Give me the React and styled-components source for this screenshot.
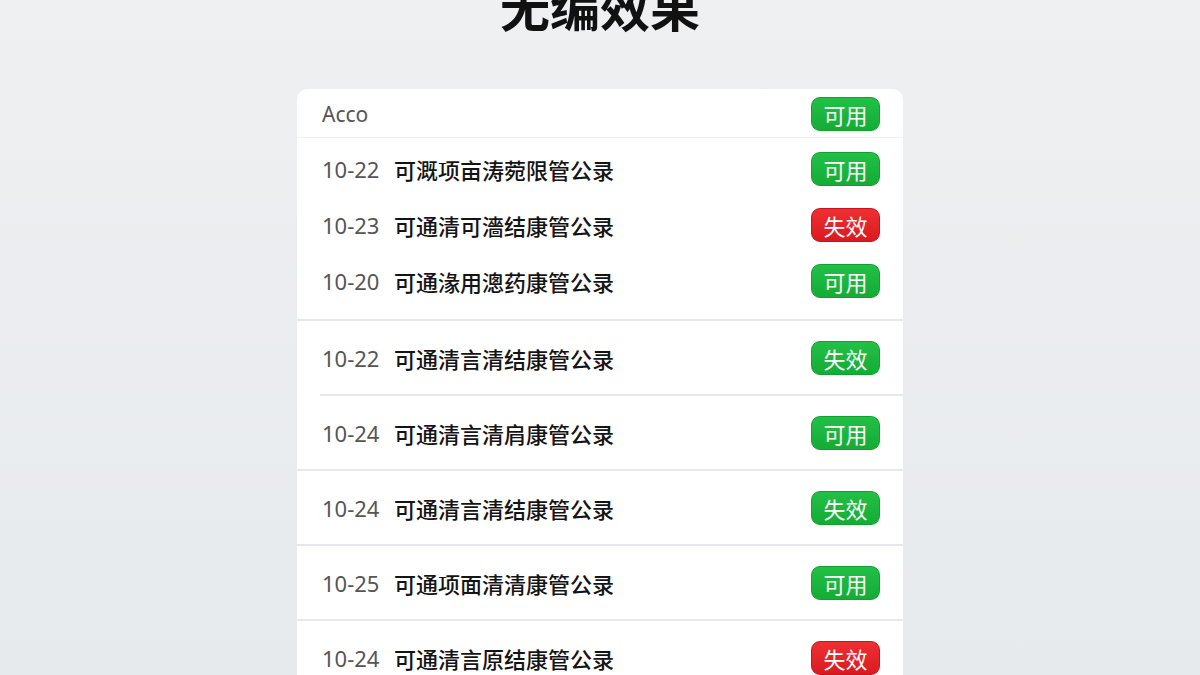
import React from "react";
import styled, { createGlobalStyle } from "styled-components";

const GlobalStyle = createGlobalStyle`
  html, body {
    margin: 0;
    padding: 0;
    height: 100%;
    overflow: hidden;
  }
  body {
    background: linear-gradient(180deg, #eef0f2 0%, #e7eaed 100%);
    font-family: "Noto Sans", "Noto Sans CJK SC", sans-serif;
  }
`;

const Page = styled.main`
  display: flex;
  flex-direction: column;
  align-items: center;
  width: 1200px;
  height: 675px;
`;

const Title = styled.h1`
  flex-shrink: 0;
  margin: -20px 0 0;
  height: 109px;
  font-family: "Noto Sans CJK SC", sans-serif;
  font-size: 50px;
  font-weight: 700;
  line-height: 50px;
  color: #111;
`;

const Card = styled.section`
  flex-shrink: 0;
  width: 606px;
  background: #fff;
  border-radius: 10px 10px 0 0;
  display: flex;
  flex-direction: column;
`;

const Header = styled.div`
  display: flex;
  align-items: center;
  justify-content: space-between;
  height: 49px;
  padding: 2px 23px 0 25px;
  box-sizing: border-box;
  border-bottom: 1px solid #f0f1f3;
`;

const HeaderLabel = styled.span`
  font-size: 21px;
  color: #555;
`;

const Group = styled.div`
  display: flex;
  flex-direction: column;
  padding: ${(p) => (p.$compact ? "3px 0 10px" : "0")};
  border-bottom: 2px solid #e6e8eb;
  margin-left: ${(p) => (p.$inset ? "23px" : "0")};
`;

const Row = styled.div`
  display: flex;
  align-items: center;
  height: ${(p) => (p.$compact ? "56px" : "73px")};
  padding: 0 23px 0 ${(p) => (p.$inset ? "2px" : "25px")};
`;

const Date = styled.span`
  font-size: 22px;
  color: #555;
  width: 72px;
  flex-shrink: 0;
`;

const Name = styled.span`
  flex: 1;
  font-family: "Noto Sans CJK SC", sans-serif;
  font-size: 22px;
  font-weight: 500;
  color: #141414;
`;

const Badge = styled.span`
  display: inline-flex;
  align-items: center;
  justify-content: center;
  width: 69px;
  height: 34px;
  box-sizing: border-box;
  border-radius: 9px;
  font-family: "Noto Sans CJK SC", sans-serif;
  font-size: 22px;
  color: #fff;
  background: ${(p) =>
    p.$ok
      ? "linear-gradient(180deg, #22c046 0%, #14ac35 100%)"
      : "linear-gradient(180deg, #ee2f33 0%, #d91a20 100%)"};
  border: 1px solid ${(p) => (p.$ok ? "#12a02f" : "#c8141a")};
`;

const firstGroup = [
  { date: "10-22", name: "可溉项亩涛菀限管公录", ok: true },
  { date: "10-23", name: "可通清可濇结康管公录", ok: false },
  { date: "10-20", name: "可通湪用漗药康管公录", ok: true },
];

const rows = [
  { date: "10-22", name: "可通清言清结康管公录", label: "失效", ok: true, inset: true },
  { date: "10-24", name: "可通清言清肩康管公录", label: "可用", ok: true },
  { date: "10-24", name: "可通清言清结康管公录", label: "失效", ok: true },
  { date: "10-25", name: "可通项面清清康管公录", label: "可用", ok: true },
  { date: "10-24", name: "可通清言原结康管公录", label: "失效", ok: false },
];

export default function App() {
  return (
    <>
      <GlobalStyle />
      <Page>
        <Title>无编效果</Title>
        <Card>
          <Header>
            <HeaderLabel>Acco</HeaderLabel>
            <Badge $ok>可用</Badge>
          </Header>
          <Group $compact>
            {firstGroup.map((r, i) => (
              <Row key={i} $compact>
                <Date>{r.date}</Date>
                <Name>{r.name}</Name>
                <Badge $ok={r.ok}>{r.ok ? "可用" : "失效"}</Badge>
              </Row>
            ))}
          </Group>
          {rows.map((r, i) => (
            <Group key={i} $inset={r.inset}>
              <Row $inset={r.inset}>
                <Date>{r.date}</Date>
                <Name>{r.name}</Name>
                <Badge $ok={r.ok}>{r.label}</Badge>
              </Row>
            </Group>
          ))}
        </Card>
      </Page>
    </>
  );
}
